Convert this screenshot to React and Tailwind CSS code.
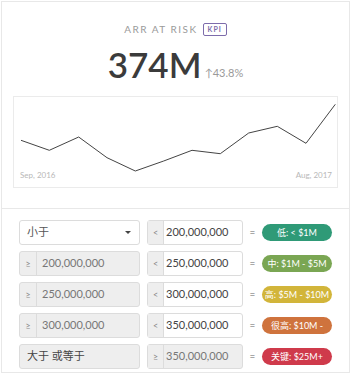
import React from 'react'

const points = [
  [19, 139.3], [47.3, 149.3], [76.7, 136], [105, 156.7], [133.3, 170], [161.7, 160],
  [190, 149.3], [218.3, 152.7], [246.7, 132], [275.3, 125.3], [304, 142.3], [333.3, 103.3],
]

const rows = [
  { left: { kind: 'select', text: '小于' }, op: '<', value: '200,000,000', badge: '低: < $1M', color: 'bg-[#2f9a77]' },
  { left: { kind: 'addon', text: '200,000,000' }, op: '<', value: '250,000,000', badge: '中: $1M - $5M', color: 'bg-[#7aa653]' },
  { left: { kind: 'addon', text: '250,000,000' }, op: '<', value: '300,000,000', badge: '高: $5M - $10M', color: 'bg-[#d2b53a]' },
  { left: { kind: 'addon', text: '300,000,000' }, op: '<', value: '350,000,000', badge: '很高: $10M -', color: 'bg-[#cf733d]' },
  { left: { kind: 'plain', text: '大于 或等于' }, op: '≥', value: '350,000,000', badge: '关键: $25M+', color: 'bg-[#cf3a4b]', disabled: true },
]

const Chart = () => {
  const d = points.map(([x, y], i) => `${i ? 'L' : 'M'}${x - 12} ${y - 96}`).join(' ')
  return (
    <div className="relative mx-[11px] h-[92px] border border-[#ebebeb]">
      <svg width="326" height="90" className="absolute left-0 top-0">
        <path d={d} fill="none" stroke="#444" strokeWidth="1" />
      </svg>
      <div className="absolute bottom-[6px] left-[6px] text-[8px] text-[#b8b8b8]">Sep, 2016</div>
      <div className="absolute bottom-[6px] right-[5px] text-[8px] text-[#b8b8b8]">Aug, 2017</div>
    </div>
  )
}

const LeftCell = ({ left }) => {
  if (left.kind === 'select') {
    return (
      <div className="flex w-[121px] items-center justify-between rounded-[3px] border border-[#dcdcdc] bg-white pl-[7px] pr-[8px] text-[11px] text-[#555]">
        <span>{left.text}</span>
        <span className="h-0 w-0 border-x-[3px] border-t-[3px] border-x-transparent border-t-[#444]" />
      </div>
    )
  }
  if (left.kind === 'addon') {
    return (
      <div className="flex w-[121px] rounded-[3px] border border-[#dcdcdc] bg-[#eeeeee] text-[11px] text-[#777]">
        <span className="flex w-[17px] items-center justify-center border-r border-[#dcdcdc] text-[9px] text-[#888]">≥</span>
        <span className="flex items-center pl-[5px]">{left.text}</span>
      </div>
    )
  }
  return (
    <div className="flex w-[121px] items-center rounded-[3px] border border-[#dcdcdc] bg-[#eeeeee] pl-[7px] text-[11px] text-[#444]">
      {left.text}
    </div>
  )
}

export default function App() {
  return (
    <div className="h-[375px] w-[351px] bg-white p-[1px] font-['Lato','Noto_Sans_CJK_SC',sans-serif]">
      <div className="h-[372px] border border-[#e8e8e8]">
        <div className="h-[207px] border-b border-[#e8e8e8] pt-[20px]">
          <div className="flex items-center justify-center gap-[5px]">
            <span className="text-[10px] tracking-[1.5px] text-[#9a9a9a]">ARR AT RISK</span>
            <span className="rounded-[2px] border border-[#7d6cab] px-[4px] text-[7px] font-bold leading-[11px] tracking-[1px] text-[#7d6cab]">KPI</span>
          </div>
          <div className="mt-[10px] flex items-end justify-center">
            <span className="text-[35px] font-semibold leading-[35px] text-[#3b3b3b]">374M</span>
            <span className="mb-[3px] ml-[3px] text-[11px] leading-[12px] text-[#9a9a9a]">↑43.8%</span>
          </div>
          <div className="mt-[14px]">
            <Chart />
          </div>
        </div>
        <div className="flex flex-col gap-[6px] pl-[17px] pt-[11px]">
          {rows.map((r, i) => (
            <div key={i} className="flex h-[25px] items-stretch">
              <LeftCell left={r.left} />
              <div className={`ml-[7px] flex w-[96px] rounded-[3px] border border-[#dcdcdc] text-[11px] ${r.disabled ? 'bg-[#eeeeee] text-[#777]' : 'bg-white text-[#444]'}`}>
                <span className="flex w-[16px] items-center justify-center border-r border-[#dcdcdc] bg-[#eeeeee] text-[9px] text-[#888]">{r.op}</span>
                <span className="flex items-center pl-[2px]">{r.value}</span>
              </div>
              <span className="flex w-[19px] items-center justify-center text-[10px] text-[#666]">=</span>
              <div className="flex items-center">
                <span className={`flex h-[17px] w-[70px] items-center justify-center rounded-full text-[9px] text-white ${r.color}`}>{r.badge}</span>
              </div>
            </div>
          ))}
        </div>
      </div>
    </div>
  )
}
